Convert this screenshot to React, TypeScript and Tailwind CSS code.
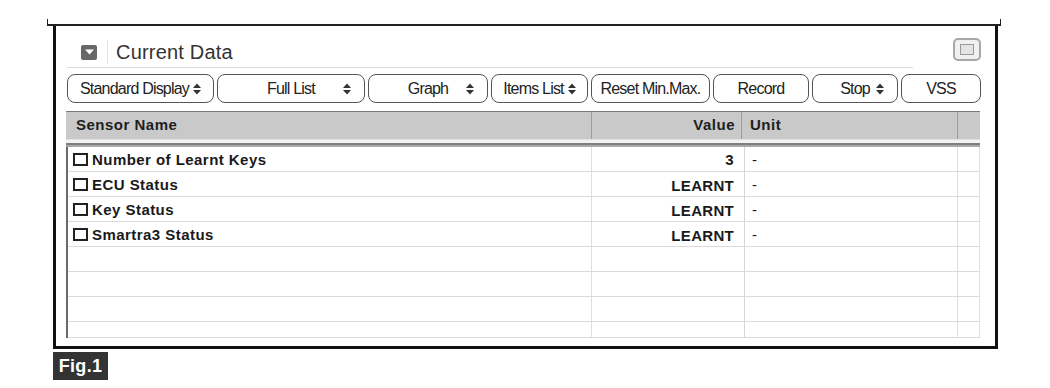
import React from "react";

const Arrows = () => (
  <svg width="8" height="12" viewBox="0 0 8 12" className="shrink-0">
    <polygon points="0,5 4,0.5 8,5" fill="#333" />
    <polygon points="0,7 4,11.5 8,7" fill="#333" />
  </svg>
);

type Btn = { label: string; w: string; mode: "center" | "inline" | "split" | "plain" };

const buttons: Btn[] = [
  { label: "Standard Display", w: "w-[147px]", mode: "inline" },
  { label: "Full List", w: "w-[148px]", mode: "split" },
  { label: "Graph", w: "w-[120px]", mode: "split" },
  { label: "Items List", w: "w-[97px]", mode: "inline" },
  { label: "Reset Min.Max.", w: "w-[119px]", mode: "plain" },
  { label: "Record", w: "w-[96px]", mode: "plain" },
  { label: "Stop", w: "w-[86px]", mode: "split" },
  { label: "VSS", w: "w-[80px]", mode: "plain" },
];

const rows = [
  { name: "Number of Learnt Keys", value: "3", unit: "-" },
  { name: "ECU Status", value: "LEARNT", unit: "-" },
  { name: "Key Status", value: "LEARNT", unit: "-" },
  { name: "Smartra3 Status", value: "LEARNT", unit: "-" },
  null,
  null,
  null,
];

export default function App() {
  return (
    <div
      className="w-[1050px] h-[388px] bg-white pt-[19px] pl-[47px] overflow-hidden"
      style={{ fontFamily: '"Liberation Sans", Arial, sans-serif' }}
    >
      {/* top line with ticks */}
      <div className="w-[954px] h-[7px] border-l border-r border-b-2 border-[#222]" />
      {/* frame */}
      <div className="ml-[6px] w-[945px] h-[323px] border-l-[3px] border-r-[3px] border-b-[3px] border-[#111] box-border flex flex-col">
        {/* title row */}
        <div className="mt-[11px] flex items-start">
          <div className="ml-[11px] w-[846px] h-[31px] border-b border-[#dcdcdc] flex items-center">
            <div className="ml-[14px] w-[16px] h-[15px] rounded-[2px] bg-[#686868] flex items-center justify-center">
              <svg width="9" height="6" viewBox="0 0 9 6">
                <polygon points="0,0.5 9,0.5 4.5,5.5" fill="#fff" />
              </svg>
            </div>
            <div className="ml-[10px] w-px h-[24px] bg-[#e2e2e2]" />
            <span className="ml-[8px] text-[20px] leading-none text-[#333] tracking-[0.2px]">Current Data</span>
          </div>
          <div className="ml-[40px] mt-[1px] w-[28px] h-[23px] rounded-[5px] border-2 border-[#a8a8a8] bg-[#f0f0f0] flex items-center justify-center">
            <div className="w-[14px] h-[11px] border border-[#9a9a9a] bg-[#e4e4e4]" />
          </div>
        </div>

        {/* buttons */}
        <div className="mt-[6px] ml-[11px] flex gap-[3px]">
          {buttons.map((b) => (
            <div
              key={b.label}
              className={`${b.w} h-[29px] rounded-[8px] border border-[#555] bg-white flex items-center text-[16px] tracking-[-0.8px] text-[#222] ${
                b.mode === "split" ? "justify-between px-[13px]" : "justify-center gap-[4px]"
              }`}
            >
              {b.mode === "split" && <span className="w-[8px]" />}
              <span className="leading-none">{b.label}</span>
              {b.mode !== "plain" && <Arrows />}
            </div>
          ))}
        </div>

        {/* table */}
        <div className="mt-[8px] ml-[10px] w-[914px] flex flex-col">
          {/* header */}
          <div className="h-[28px] border-t border-[#7a7a7a] bg-[#c9c9c9] flex text-[15px] font-bold tracking-[0.5px] text-[#1e1e1e] box-border">
            <div className="w-[526px] border-r border-[#9c9c9c] pl-[10px] flex items-center">Sensor Name</div>
            <div className="w-[150px] border-r border-[#9c9c9c] pr-[6px] flex items-center justify-end">Value</div>
            <div className="w-[216px] border-r border-[#9c9c9c] pl-[8px] flex items-center">Unit</div>
            <div className="flex-1" />
          </div>
          <div className="h-[4px] bg-[#f2f2f2] border-t border-[#e0e0e0]" />
          <div className="h-[4px] border-t-2 border-[#7e7e7e] bg-[#a9a9a9]" />
          {/* body */}
          <div className="border-l-2 border-[#6a6a6a] flex flex-col">
            {rows.map((r, i) => (
              <div key={i} className="h-[25px] border-b border-[#dadada] flex box-border text-[15px] font-bold text-[#1a1a1a]">
                <div className="w-[524px] border-r border-[#e0e0e0] pl-[5px] flex items-center">
                  {r && (
                    <>
                      <div className="w-[15px] h-[13px] border-2 border-[#222] mr-[4px] shrink-0" />
                      <span className="tracking-[0.45px] leading-none">{r.name}</span>
                    </>
                  )}
                </div>
                <div className="w-[153px] border-r border-[#d6d6d6] pr-[10px] flex items-center justify-end">
                  {r && <span className={`leading-none tracking-[0.3px] ${i > 0 ? "pt-[3px]" : ""}`}>{r.value}</span>}
                </div>
                <div className="w-[213px] border-r border-[#e0e0e0] pl-[7px] flex items-center">
                  {r && <span className="leading-none font-normal">{r.unit}</span>}
                </div>
                <div className="w-[22px] border-r border-[#e0e0e0]" />
              </div>
            ))}
            <div className="h-[16px] border-b border-[#dadada] flex box-border">
              <div className="w-[524px] border-r border-[#e0e0e0]" />
              <div className="w-[153px] border-r border-[#d6d6d6]" />
              <div className="w-[213px] border-r border-[#e0e0e0]" />
              <div className="w-[22px] border-r border-[#e0e0e0]" />
            </div>
          </div>
        </div>
      </div>

      {/* Fig.1 label */}
      <div className="ml-[6px] mt-[3px] w-[55px] h-[28px] bg-[#333] flex items-center justify-center">
        <span className="text-white text-[18px] font-bold leading-none tracking-[0.3px]">Fig.1</span>
      </div>
    </div>
  );
}
